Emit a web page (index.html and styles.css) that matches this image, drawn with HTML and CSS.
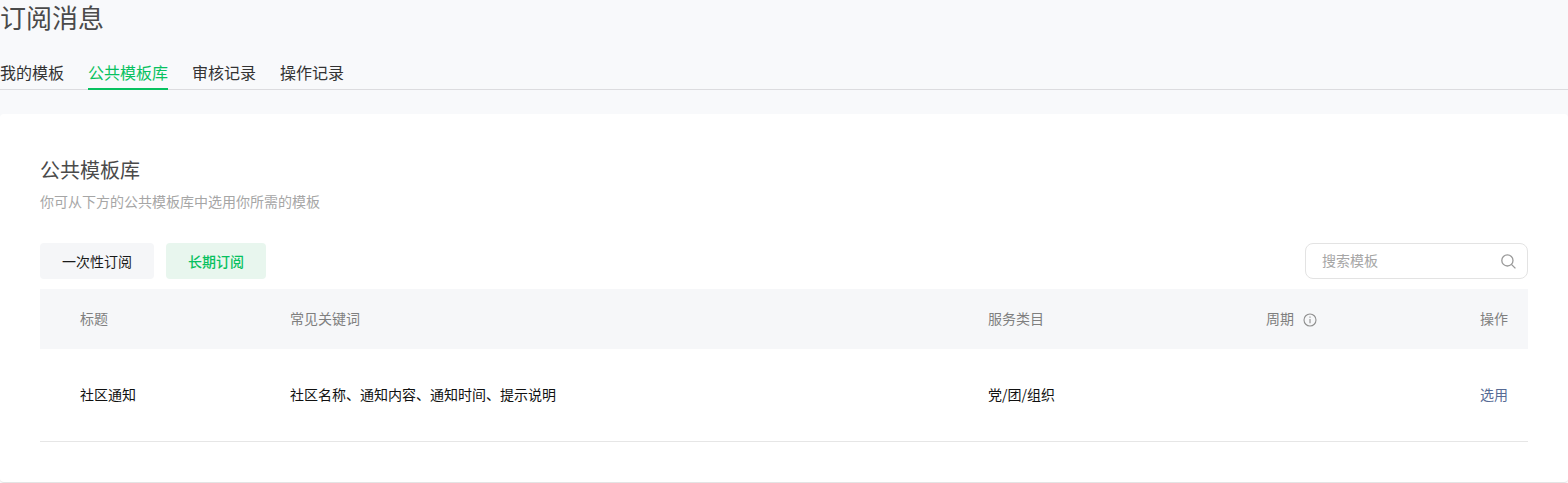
FILE: index.html
```html
<!DOCTYPE html>
<html lang="zh-CN">
<head>
<meta charset="utf-8">
<title>订阅消息</title>
<link rel="stylesheet" href="styles.css">
</head>
<body>
<h1 class="page-title">订阅消息</h1>
<nav class="tabs">
  <a class="tab">我的模板</a>
  <a class="tab tab-active">公共模板库</a>
  <a class="tab">审核记录</a>
  <a class="tab">操作记录</a>
</nav>
<section class="card">
  <h2 class="card-title">公共模板库</h2>
  <p class="card-desc">你可从下方的公共模板库中选用你所需的模板</p>
  <div class="toolbar">
    <button class="pill">一次性订阅</button>
    <button class="pill pill-active">长期订阅</button>
    <div class="search">
      <span class="search-text">搜索模板</span>
      <svg class="search-icon" width="15" height="15" viewBox="0 0 15 15" fill="none" stroke="#999" stroke-width="1.3"><circle cx="6.4" cy="6.4" r="5.6"/><path d="M10.4 10.4 14.4 14.4"/></svg>
    </div>
  </div>
  <div class="row row-head">
    <div class="cell-first">标题</div>
    <div>常见关键词</div>
    <div>服务类目</div>
    <div class="period">周期
      <svg class="info-icon" width="14" height="14" viewBox="0 0 14 14" fill="none" stroke="#8f8f8f" stroke-width="1.1"><circle cx="7" cy="7" r="6"/><path d="M7 6v4.2M7 3.6v1.2"/></svg>
    </div>
    <div class="cell-last">操作</div>
  </div>
  <div class="row row-body">
    <div class="cell-first">社区通知</div>
    <div>社区名称、通知内容、通知时间、提示说明</div>
    <div>党/团/组织</div>
    <div></div>
    <div class="cell-last"><a class="link">选用</a></div>
  </div>
</section>
</body>
</html>
```
FILE: styles.css
```css
* { box-sizing: border-box; }
html, body { margin: 0; padding: 0; }
body {
  height: 483px;
  overflow: hidden;
  background: #f8f9fb;
  font-family: "Noto Sans CJK SC", "Liberation Sans", sans-serif;
  color: #353535;
}
.page-title {
  margin: 0;
  height: 36px;
  font-size: 26px;
  font-weight: 400;
  line-height: 34px;
  color: #4a4a4a;
}
.tabs {
  display: flex;
  gap: 24px;
  height: 54px;
  padding-top: 24px;
  border-bottom: 1px solid #dcdcdf;
}
.tab {
  height: 30px;
  font-size: 16px;
  line-height: 24px;
  color: #333;
}
.tab-active {
  color: #07c160;
  border-bottom: 2px solid #07c160;
}
.card {
  margin-top: 24px;
  height: 369px;
  padding: 40px 40px 0;
  background: #fff;
  border-bottom: 1px solid #e4e4e4;
  border-radius: 4px;
}
.card-title {
  margin: 0;
  font-size: 20px;
  font-weight: 400;
  line-height: 32px;
  color: #4a4a4a;
}
.card-desc {
  margin: 5px 0 0;
  font-size: 14px;
  line-height: 20px;
  color: #a6a6a6;
}
.toolbar {
  display: flex;
  gap: 12px;
  margin-top: 32px;
}
.pill {
  height: 36px;
  padding: 0 22px;
  border: 0;
  border-radius: 4px;
  background: #f5f6f8;
  color: #1a1a1a;
  font: inherit;
  font-size: 14px;
}
.pill-active {
  background: #e8f6ee;
  color: #07c160;
  font-weight: 500;
}
.search {
  display: flex;
  align-items: center;
  justify-content: space-between;
  width: 223px;
  height: 36px;
  margin-left: auto;
  padding: 0 11px 0 16px;
  border: 1px solid #e3e3e3;
  border-radius: 8px;
  background: #fff;
  font-size: 14px;
  color: #a6a6a6;
}
.search-text { margin-top: -2px; }
.row {
  display: grid;
  grid-template-columns: 250px 698px 278px 1fr 88px;
  align-items: center;
  font-size: 14px;
}
.row-head {
  height: 60px;
  margin-top: 10px;
  padding-bottom: 2px;
  background: #f6f7f9;
  color: #7f7f7f;
  font-size: 14px;
}
.row-body {
  height: 93px;
  padding-bottom: 2px;
  border-bottom: 1px solid #e6e6e6;
  color: #111;
}
.cell-first { padding-left: 40px; }
.cell-last { padding-right: 20px; text-align: right; }
.period { display: flex; align-items: center; gap: 9px; }
.info-icon { margin-top: 4px; }
.link { color: #576b95; }
```
